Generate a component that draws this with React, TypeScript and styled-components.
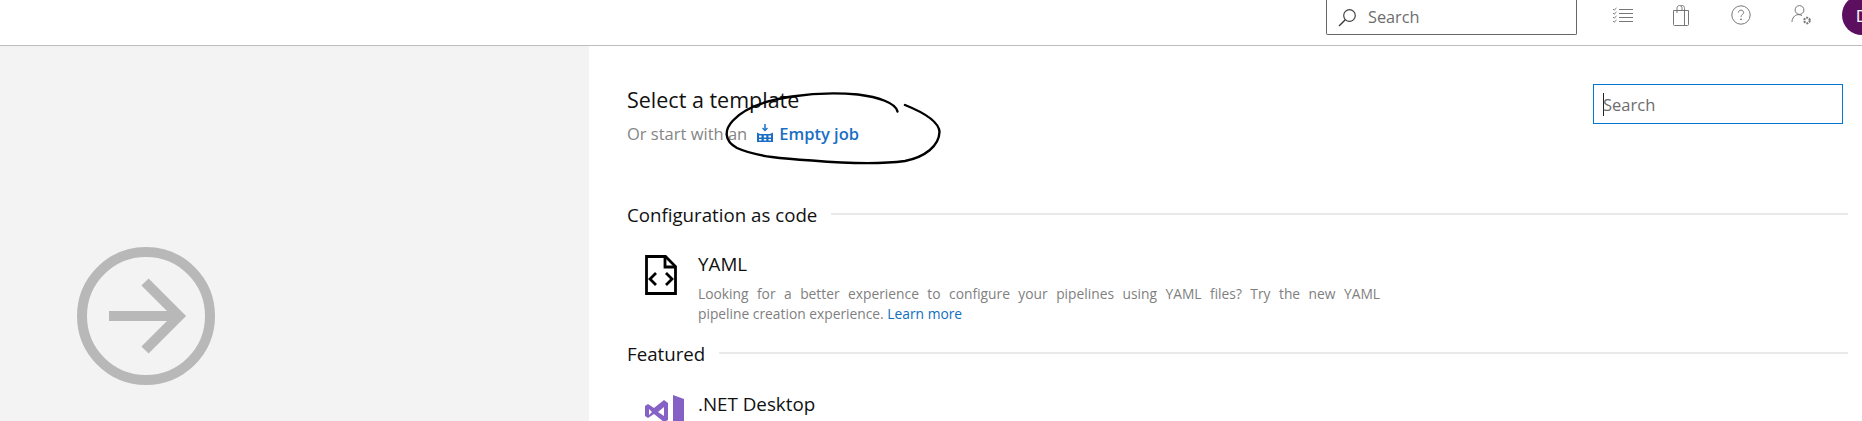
import styled, { createGlobalStyle } from 'styled-components';

const GlobalStyle = createGlobalStyle`
  html,
  body {
    margin: 0;
    height: 421px;
    overflow: hidden;
    background: #fff;
    font-family: 'Open Sans', 'Noto Sans', sans-serif;
  }
`;

const Page = styled.div`
  display: flex;
  flex-direction: column;
  height: 421px;
  position: relative;
  overflow: hidden;
`;

const Header = styled.header`
  align-items: flex-start;
  border-bottom: 1px solid #bdbdbd;
  box-sizing: content-box;
  display: flex;
  flex: 0 0 45px;
  justify-content: flex-end;
`;

const TopSearch = styled.div`
  align-items: center;
  border: 1px solid #666;
  border-top: none;
  border-radius: 0 0 2px 2px;
  box-sizing: border-box;
  color: #6d6d6d;
  display: flex;
  font-size: 16.3px;
  gap: 11px;
  height: 35px;
  margin-right: 15px;
  padding-left: 11px;
  width: 251px;
`;

const NavIcons = styled.div`
  align-items: flex-start;
  display: flex;
  padding-top: 5px;
`;

const NavIcon = styled.span<{ $width: number }>`
  display: flex;
  flex: 0 0 ${(p) => p.$width}px;
  justify-content: center;
  svg {
    display: block;
  }
`;

const Avatar = styled.div`
  align-items: center;
  background: #5c0f5e;
  border-radius: 50%;
  color: #fff;
  display: flex;
  flex: 0 0 40px;
  font-size: 17px;
  height: 40px;
  justify-content: center;
  margin: -10px -20px 0 10px;
`;

const Body = styled.div`
  display: flex;
  flex: 1;
  min-height: 0;
`;

const LeftPanel = styled.aside`
  background: #f3f3f3;
  box-sizing: border-box;
  flex: 0 0 589px;
  padding: 201px 0 0 77px;
`;

const Main = styled.main`
  flex: 1;
  min-width: 0;
  padding: 38px 14px 0 38px;
`;

const TopRow = styled.div`
  align-items: flex-start;
  display: flex;
  justify-content: space-between;
  padding-right: 5px;
`;

const Title = styled.h1`
  color: #111;
  font-size: 21.5px;
  font-weight: 400;
  line-height: 28px;
  margin: 2px 0 0;
`;

const SubLine = styled.div`
  align-items: center;
  color: #858585;
  display: flex;
  font-size: 16.5px;
  height: 24px;
  margin-top: 7px;
`;

const EmptyJob = styled.a`
  align-items: center;
  color: #1a6fc4;
  display: flex;
  font-weight: 600;
  gap: 6px;
  margin-left: 10px;
`;

const SearchBox = styled.div`
  align-items: center;
  border: 1px solid #0078d4;
  box-sizing: border-box;
  color: #6d6d6d;
  display: flex;
  font-size: 16.5px;
  height: 40px;
  padding-left: 9px;
  width: 250px;
`;

const Caret = styled.span`
  background: #222;
  display: inline-block;
  flex: 0 0 1px;
  height: 23px;
  margin-right: -1px;
`;

const SectionHead = styled.div<{ $top: number }>`
  align-items: center;
  color: #111;
  display: flex;
  font-size: 18.7px;
  gap: 14px;
  height: 26px;
  margin-top: ${(p) => p.$top}px;

  &::after {
    background: #e9e9e9;
    content: '';
    flex: 1;
    height: 2px;
  }
`;

const TemplateRow = styled.div<{ $top: number }>`
  align-items: flex-start;
  display: flex;
  margin-top: ${(p) => p.$top}px;
  padding-left: 18px;
`;

const TemplateIcon = styled.div`
  flex: 0 0 53px;
  padding-top: 3px;
  svg {
    display: block;
  }
`;

const TemplateText = styled.div`
  flex: 0 0 682px;
`;

const TemplateName = styled.div`
  color: #111;
  font-size: 18.8px;
  line-height: 24px;
`;

const Description = styled.p`
  color: #7f7f7f;
  font-size: 13.8px;
  line-height: 20px;
  margin: 8px 0 0;
`;

const JustifiedLine = styled.span`
  display: block;
  text-align: justify;
  text-align-last: justify;
`;

const LearnMore = styled.a`
  color: #106ebe;
`;

const InkCircle = styled.svg`
  left: 720px;
  pointer-events: none;
  position: absolute;
  top: 88px;
`;

export default function App() {
  return (
    <Page>
      <GlobalStyle />
      <Header>
        <TopSearch>
          <svg width="19" height="19" viewBox="0 0 19 19" fill="none">
            <circle cx="11.500" cy="7.500" r="5.800" stroke="#444" strokeWidth="1.200" />
            <path d="M7.300 11.700 1 18" stroke="#333" strokeWidth="1.300" />
          </svg>
          Search
        </TopSearch>
        <NavIcons>
          <NavIcon $width={60}>
            <svg width="21" height="18" viewBox="0 -2 21 18" fill="none" stroke="#777" strokeWidth="1">
              <path d="M7 2.500h14M7 6.500h14M7 10.500h14M7 14.500h14" />
              <path d="m1 2 1.200 1.200L4.500 1M1 6l1.200 1.200L4.500 5M1 10l1.200 1.200L4.500 9M1 14l1.200 1.200L4.500 13" />
            </svg>
          </NavIcon>
          <NavIcon $width={58}>
            <svg width="18" height="21" viewBox="0 0 18 21" fill="none" stroke="#777" strokeWidth="1">
              <path d="M1.500 5.500h15v14a1 1 0 0 1-1 1h-13a1 1 0 0 1-1-1z" />
              <path d="M12.500 5.500v15M5 8V3.500C5 1.500 6 .5 7.500 .5S10 1.500 10 3.500V5M8.500 1c2-1 4-.5 4 2.500v2" />
            </svg>
          </NavIcon>
          <NavIcon $width={62}>
            <svg width="20" height="20" viewBox="0 0 20 20" fill="none" stroke="#777" strokeWidth="1">
              <circle cx="10" cy="10" r="9.200" />
              <path d="M7.400 7.600C7.500 6 8.600 5.200 10 5.200c1.500 0 2.600 1 2.600 2.300 0 2-2.600 2.200-2.600 4.400" />
              <circle cx="10" cy="14.300" r=".5" fill="#777" />
            </svg>
          </NavIcon>
          <NavIcon $width={60}>
            <svg width="22" height="21" viewBox="0 0 22 21" fill="none" stroke="#777" strokeWidth="1">
              <circle cx="8.500" cy="5" r="4.400" />
              <path d="M1 17c0-4 2.600-7 6-7.400 1.500-.1 3 .3 4 1" />
              <circle cx="16" cy="15.500" r="2.800" strokeWidth="2" strokeDasharray="2 1" />
            </svg>
          </NavIcon>
          <Avatar>D</Avatar>
        </NavIcons>
      </Header>
      <Body>
        <LeftPanel>
          <svg width="138" height="138" viewBox="0 0 138 138" fill="none" stroke="#b8b8b8" strokeWidth="10">
            <circle cx="69" cy="69" r="64" />
            <path d="M32 69h70" />
            <path d="M68 35l34 34-34 34" />
          </svg>
        </LeftPanel>
        <Main>
          <TopRow>
            <div>
              <Title>Select a template</Title>
              <SubLine>
                Or start with an
                <EmptyJob>
                  <svg width="16" height="18" viewBox="0 0 16 18" fill="none">
                    <path d="M8 0v6" stroke="#1a6fc4" strokeWidth="1.500" />
                    <path d="M5.500 4l2.500 2.500L10.500 4" stroke="#1a6fc4" strokeWidth="1.300" />
                    <path d="M0 18V8.500l3 1.500h10l3-1.500V18z" fill="#1a6fc4" />
                    <path d="M2 11.500h2.500v2H2zM6.800 11.500h2.500v2H6.800zM11.500 11.500H14v2h-2.500zM2 15h2.500v1.600H2zM6.800 15h2.500v1.600H6.800zM11.500 15H14v1.600h-2.500z" fill="#fff" />
                  </svg>
                  Empty job
                </EmptyJob>
              </SubLine>
            </div>
            <SearchBox>
              <Caret />
              Search
            </SearchBox>
          </TopRow>
          <SectionHead $top={56}>Configuration as code</SectionHead>
          <TemplateRow $top={25}>
            <TemplateIcon>
              <svg width="32" height="40" viewBox="0 0 32 40" fill="none" stroke="#000" strokeWidth="2.800">
                <path d="M1.500 1.500h19l10 10v27h-29z" />
                <path d="M20 1.500v10.500h10.500" />
                <path d="M11 18l-6 6 6 6M21 18l6 6-6 6" />
              </svg>
            </TemplateIcon>
            <TemplateText>
              <TemplateName>YAML</TemplateName>
              <Description>
                <JustifiedLine>
                  Looking for a better experience to configure your pipelines using YAML files? Try
                  the new YAML
                </JustifiedLine>
                pipeline creation experience. <LearnMore>Learn more</LearnMore>
              </Description>
            </TemplateText>
          </TemplateRow>
          <SectionHead $top={16}>Featured</SectionHead>
          <TemplateRow $top={26}>
            <TemplateIcon>
              <svg width="40" height="30" viewBox="0 0 40 30" fill="#8661c5">
                <path d="M28 0l11 4v26l-11-2z" />
                <path d="M0 11l3-2 6 4 10-8 4 3v17l-4 2-10-8-6 4-3-2zM4 14v6l3-3zM19 12l-6 5 6 4z" fillRule="evenodd" />
              </svg>
            </TemplateIcon>
            <TemplateText>
              <TemplateName>.NET Desktop</TemplateName>
            </TemplateText>
          </TemplateRow>
        </Main>
      </Body>
      <InkCircle width="225" height="82" viewBox="720 88 225 82" fill="none">
        <path
          d="M897.500 111.500C896 103 878 97 858 94.500C835 92.500 812 93.500 792 96.500C768 100 745 107 733 120.500C724 130 724 141 737 148C757 157 785 159 812 160.500C842 163 875 165 905 161C925 157 939 146 939.500 132C939 122 925 113 905 105"
          stroke="#000"
          strokeWidth="2.400"
          strokeLinecap="round"
        />
      </InkCircle>
    </Page>
  );
}
